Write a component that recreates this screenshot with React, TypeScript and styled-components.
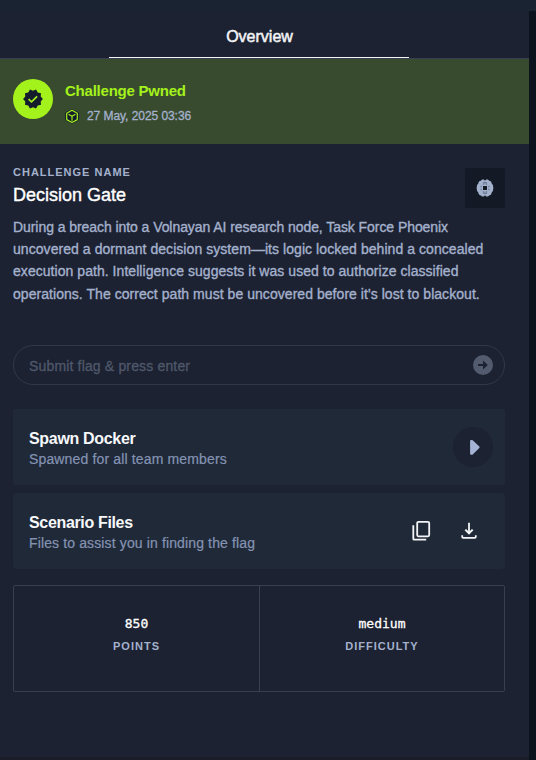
import React from "react";
import styled, { createGlobalStyle } from "styled-components";

const GlobalStyle = createGlobalStyle`
  * { box-sizing: border-box; }
  body { margin: 0; background: #0c131c; font-family: "Liberation Sans", Arial, sans-serif; }
  h1, h2, h3, p { margin: 0; }
  button { border: 0; padding: 0; background: none; display: grid; place-items: center; }
`;

const Page = styled.div`
  width: 536px;
  height: 760px;
  overflow: hidden;
  display: flex;
  flex-direction: column;
`;
const TopStrip = styled.div`
  flex: none;
  height: 11px;
  background: #1a2332;
`;
const Panel = styled.main`
  width: 529px;
  flex: none;
  height: 746px;
  background: #1c2231;
`;
const Footer = styled.div`
  height: 3px;
  width: 529px;
  background: #1a1c28;
`;
const Tabs = styled.nav`
  height: 48px;
  display: flex;
  justify-content: center;
  border-bottom: 1px solid #383f50;
  padding-right: 11px;
`;
const Tab = styled.div`
  width: 300px;
  height: 47px;
  border-bottom: 1px solid #f2f3f8;
  text-align: center;
`;
const Label = styled.span<{ $size: number; $line: number; $color: string; $spacing?: number; $stroke?: number; $weight?: number }>`
  display: block;
  white-space: nowrap;
  font-size: ${(p) => p.$size}px;
  line-height: ${(p) => p.$line}px;
  color: ${(p) => p.$color};
  letter-spacing: ${(p) => p.$spacing ?? 0}px;
  font-weight: ${(p) => p.$weight ?? 400};
  -webkit-text-stroke: ${(p) => p.$stroke ?? 0}px ${(p) => p.$color};
`;
const TabLabel = styled(Label)`
  padding: 16px 0 0 1px;
`;
const Banner = styled.section`
  height: 85px;
  padding: 20px 13px;
  display: flex;
  gap: 12px;
  background: #384b2e;
`;
const Seal = styled.div`
  width: 40px;
  height: 40px;
  border-radius: 50%;
  display: grid;
  place-items: center;
  background: #a4f21c;
`;
const BannerText = styled.div`
  padding-top: 1px;
`;
const DateRow = styled.div`
  display: flex;
  align-items: flex-start;
  gap: 8px;
  margin-top: 7px;
`;
const Content = styled.div`
  padding: 24px 24px 0 13px;
`;
const Heading = styled.header`
  height: 48px;
  display: flex;
  justify-content: space-between;
`;
const Category = styled.div`
  width: 40px;
  height: 40px;
  border-radius: 2px;
  background: #131a26;
  display: grid;
  place-items: center;
`;
const Description = styled.div`
  height: 129.4px;
  margin-top: -0.4px;
`;
const FlagField = styled.div`
  height: 40px;
  border: 1px solid #303848;
  border-radius: 20px;
  padding: 0 11px 0 15px;
  display: flex;
  align-items: center;
  justify-content: space-between;
`;
const Placeholder = styled(Label)`
  padding-top: 2px;
`;
const Card = styled.section<{ $top: number; $radius: number }>`
  height: 76px;
  margin-top: ${(p) => p.$top}px;
  border-radius: ${(p) => p.$radius}px;
  padding: 0 12px 0 16px;
  display: flex;
  align-items: center;
  justify-content: space-between;
  background: #202938;
`;
const CardText = styled.div`
  padding-top: 2px;
`;
const PlayButton = styled.button`
  width: 40px;
  height: 40px;
  border-radius: 50%;
  background: #1c2231;
`;
const Actions = styled.div`
  display: flex;
  gap: 24px;
  padding-right: 12px;
`;
const Stats = styled.section`
  margin-top: 16px;
  height: 107px;
  display: grid;
  grid-template-columns: 246px 1fr;
  border: 1px solid #384050;
  border-radius: 2px;
`;
const Stat = styled.div`
  padding-top: 29px;
  display: flex;
  flex-direction: column;
  align-items: center;
  &:first-child { border-right: 1px solid #384050; }
`;
const StatValue = styled(Label)`
  font-family: "DejaVu Sans Mono", monospace;
`;

const muted = "#a4b1cd";

const VerifiedIcon = () => (
  <svg width="24" height="24" viewBox="0 0 24 24">
    <path fill="#141d2b" d="m23 12-2.44-2.79.34-3.69-3.61-.82-1.89-3.2L12 2.96 8.6 1.5 6.71 4.69 3.1 5.5l.34 3.7L1 12l2.44 2.79-.34 3.7 3.61.82L8.6 22.5l3.4-1.47 3.4 1.46 1.89-3.19 3.61-.82-.34-3.69z" transform="translate(1.2 1.2) scale(.9)" />
    <path d="m7.6 12.2 2.9 2.7 5.6-5.6" fill="none" stroke="#a4f21c" strokeWidth="1.7" />
  </svg>
);

const CubeIcon = () => (
  <svg width="14" height="15" viewBox="0 0 14 15">
    <path d="M7 0 13.8 3.6v7.6L7 14.8.2 11.2V3.6z" fill="#141d2b" />
    <path d="M7 1.3 12.3 4.2v6.4L7 13.5 1.7 10.6V4.2zM3.6 5.3 7 7.3l3.4-2M7 7.3v4.4" fill="none" stroke="#a4f21c" strokeWidth="1.2" strokeLinejoin="round" />
  </svg>
);

const BrainChipIcon = () => (
  <svg width="18" height="18" viewBox="0 0 18 18">
    <path fill={muted} d="M6.3.6h1.5L9 1.8 10.2.6h1.6l1.5 1.1 1.8.9.6 2 1.2 1.5.2 1.5.3 1.4-.3 1.5-.2 1.5-1.2 1.5-.6 2-1.8.9-1.5 1.1h-1.6L9 16.3l-1.2 1.2H6.3l-1.6-1.1-1.8-.9-.6-2-1.2-1.5-.2-1.5L.6 9l.3-1.4.2-1.5 1.2-1.5.6-2 1.8-.9z" />
    <path d="M7 7h4v4H7z" fill="#131a26" />
    <path d="M6.8 5.1h1.5M9.7 5.1h1.5M6.8 12.9h1.5M9.7 12.9h1.5M5.1 6.8v1.5M5.1 9.7v1.5M12.9 6.8v1.5M12.9 9.7v1.5M7 3.8h4M7 14.2h4" fill="none" stroke="#4c5871" strokeWidth=".8" />
  </svg>
);

const SubmitIcon = () => (
  <svg width="20" height="20" viewBox="0 0 20 20">
    <circle cx="10" cy="10" r="10" fill="#535b6e" />
    <path d="M5 8.9h5V5.4l4.8 4.6-4.8 4.6v-3.5H5z" fill="#1c2231" />
  </svg>
);

const PlayIcon = () => (
  <svg width="24" height="24" viewBox="0 0 24 24">
    <path d="M10.1 5.9v12.8h.9l6.6-6.4-6.6-6.4z" fill="#a5b4d4" stroke="#a5b4d4" strokeWidth="2" strokeLinejoin="round" />
  </svg>
);

const CopyIcon = () => (
  <svg width="24" height="24" viewBox="0 0 24 24" fill="none" stroke="#f3f5f6" strokeWidth="1.8" strokeLinejoin="round">
    <rect x="8.2" y="2.9" width="12" height="14.4" rx="1.2" />
    <path d="M4.3 6.3v13.4q0 1 1 1h11.9" />
  </svg>
);

const DownloadIcon = () => (
  <svg width="24" height="24" viewBox="0 0 24 24" fill="none" stroke="#f3f5f6" strokeWidth="1.8">
    <path d="M12 3.7v10" />
    <path d="m8.3 10.6 3.7 3.7 3.7-3.7" strokeWidth="2" />
    <path d="M5.2 16.2v1.6q0 1 1 1h11.6q1 0 1-1v-1.6" />
  </svg>
);

const lines = [
  { text: "During a breach into a Volnayan AI research node, Task Force Phoenix", spacing: -0.065 },
  { text: "uncovered a dormant decision system—its logic locked behind a concealed", spacing: 0.06 },
  { text: "execution path. Intelligence suggests it was used to authorize classified", spacing: 0.048 },
  { text: "operations. The correct path must be uncovered before it's lost to blackout.", spacing: 0.048 },
];

export default function App() {
  return (
    <>
      <GlobalStyle />
      <Page>
        <TopStrip />
        <Panel>
          <Tabs>
            <Tab>
              <TabLabel $size={16} $line={20} $color="#f4f5f8" $stroke={0.5}>Overview</TabLabel>
            </Tab>
          </Tabs>
          <Banner>
            <Seal><VerifiedIcon /></Seal>
            <BannerText>
              <Label as="h1" $size={15} $line={22} $color="#a4f21c" $weight={700} $spacing={-0.23}>Challenge Pwned</Label>
              <DateRow>
                <CubeIcon />
                <Label $size={12} $line={14} $color={muted} $stroke={0.3} $spacing={-0.06}>27 May, 2025 03:36</Label>
              </DateRow>
            </BannerText>
          </Banner>
          <Content>
            <Heading>
              <div>
                <Label $size={11} $line={9} $color={muted} $weight={700} $spacing={1}>CHALLENGE NAME</Label>
                <Label as="h2" $size={18} $line={36} $color="#ffffff" $stroke={0.4}>Decision Gate</Label>
              </div>
              <Category><BrainChipIcon /></Category>
            </Heading>
            <Description>
              {lines.map((l) => (
                <Label key={l.text} $size={14} $line={22.4} $color={muted} $spacing={l.spacing} $stroke={0.35}>{l.text}</Label>
              ))}
            </Description>
            <FlagField>
              <Placeholder $size={14} $line={20} $color="#4f586b" $stroke={0.3} $spacing={0.16}>Submit flag &amp; press enter</Placeholder>
              <SubmitIcon />
            </FlagField>
            <Card $top={24} $radius={2}>
              <CardText>
                <Label as="h3" $size={16} $line={21} $color="#f7f8fa" $weight={700} $spacing={-0.32}>Spawn Docker</Label>
                <Label $size={14} $line={20} $color="#8493b3" $stroke={0.2} $spacing={0.15}>Spawned for all team members</Label>
              </CardText>
              <PlayButton aria-label="Start"><PlayIcon /></PlayButton>
            </Card>
            <Card $top={8} $radius={4}>
              <CardText>
                <Label as="h3" $size={16} $line={21} $color="#f7f8fa" $weight={700} $spacing={-0.34}>Scenario Files</Label>
                <Label $size={14} $line={20} $color="#8493b3" $stroke={0.2} $spacing={0.13}>Files to assist you in finding the flag</Label>
              </CardText>
              <Actions>
                <button aria-label="Copy"><CopyIcon /></button>
                <button aria-label="Download"><DownloadIcon /></button>
              </Actions>
            </Card>
            <Stats>
              <Stat>
                <StatValue $size={13} $line={18} $color="#ffffff" $stroke={0.3}>850</StatValue>
                <Label $size={11} $line={27} $color={muted} $weight={700} $spacing={1}>POINTS</Label>
              </Stat>
              <Stat>
                <StatValue $size={13} $line={18} $color="#ffffff" $stroke={0.3}>medium</StatValue>
                <Label $size={11} $line={27} $color={muted} $weight={700} $spacing={1}>DIFFICULTY</Label>
              </Stat>
            </Stats>
          </Content>
        </Panel>
        <Footer />
      </Page>
    </>
  );
}
